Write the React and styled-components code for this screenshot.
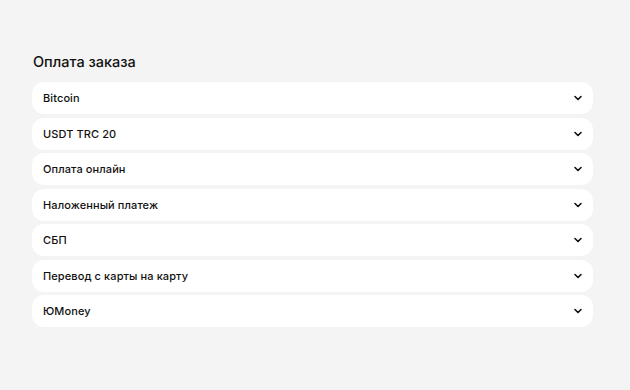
import React from 'react';
import styled, { createGlobalStyle } from 'styled-components';

const GlobalStyle = createGlobalStyle`
  html, body {
    margin: 0;
    background: #f4f4f4;
  }
  body {
    font-family: Inter, "Noto Sans", sans-serif;
    color: #111;
  }
`

const Page = styled.div`
  padding: 52px 37px 0 32px;
`

const Title = styled.h2`
  margin: 0 0 10px 1px;
  font-size: 14.5px;
  font-weight: 500;
  line-height: 20px;
  color: #111;
`

const List = styled.div`
  display: flex;
  flex-direction: column;
  gap: 3.5px;
`

const Item = styled.div`
  display: flex;
  align-items: center;
  justify-content: space-between;
  height: 32px;
  padding: 0 10px 0 11px;
  background: #fff;
  border-radius: 12px;
  font-size: 11px;
  font-weight: 500;
  letter-spacing: 0.1px;
  cursor: pointer;
`

const Chevron = () => (
  <svg width="10" height="10" viewBox="0 0 10 10" fill="none">
    <path d="M2 3.5 L5 6.5 L8 3.5" stroke="#111" strokeWidth="1.6" strokeLinecap="round" strokeLinejoin="round" />
  </svg>
)

const methods = [
  'Bitcoin',
  'USDT TRC 20',
  'Оплата онлайн',
  'Наложенный платеж',
  'СБП',
  'Перевод с карты на карту',
  'ЮMoney',
]

const App = () => (
  <>
    <GlobalStyle />
    <Page>
      <Title>Оплата заказа</Title>
      <List>
        {methods.map(m => (
          <Item key={m}>
            <span>{m}</span>
            <Chevron />
          </Item>
        ))}
      </List>
    </Page>
  </>
)

export default App;
